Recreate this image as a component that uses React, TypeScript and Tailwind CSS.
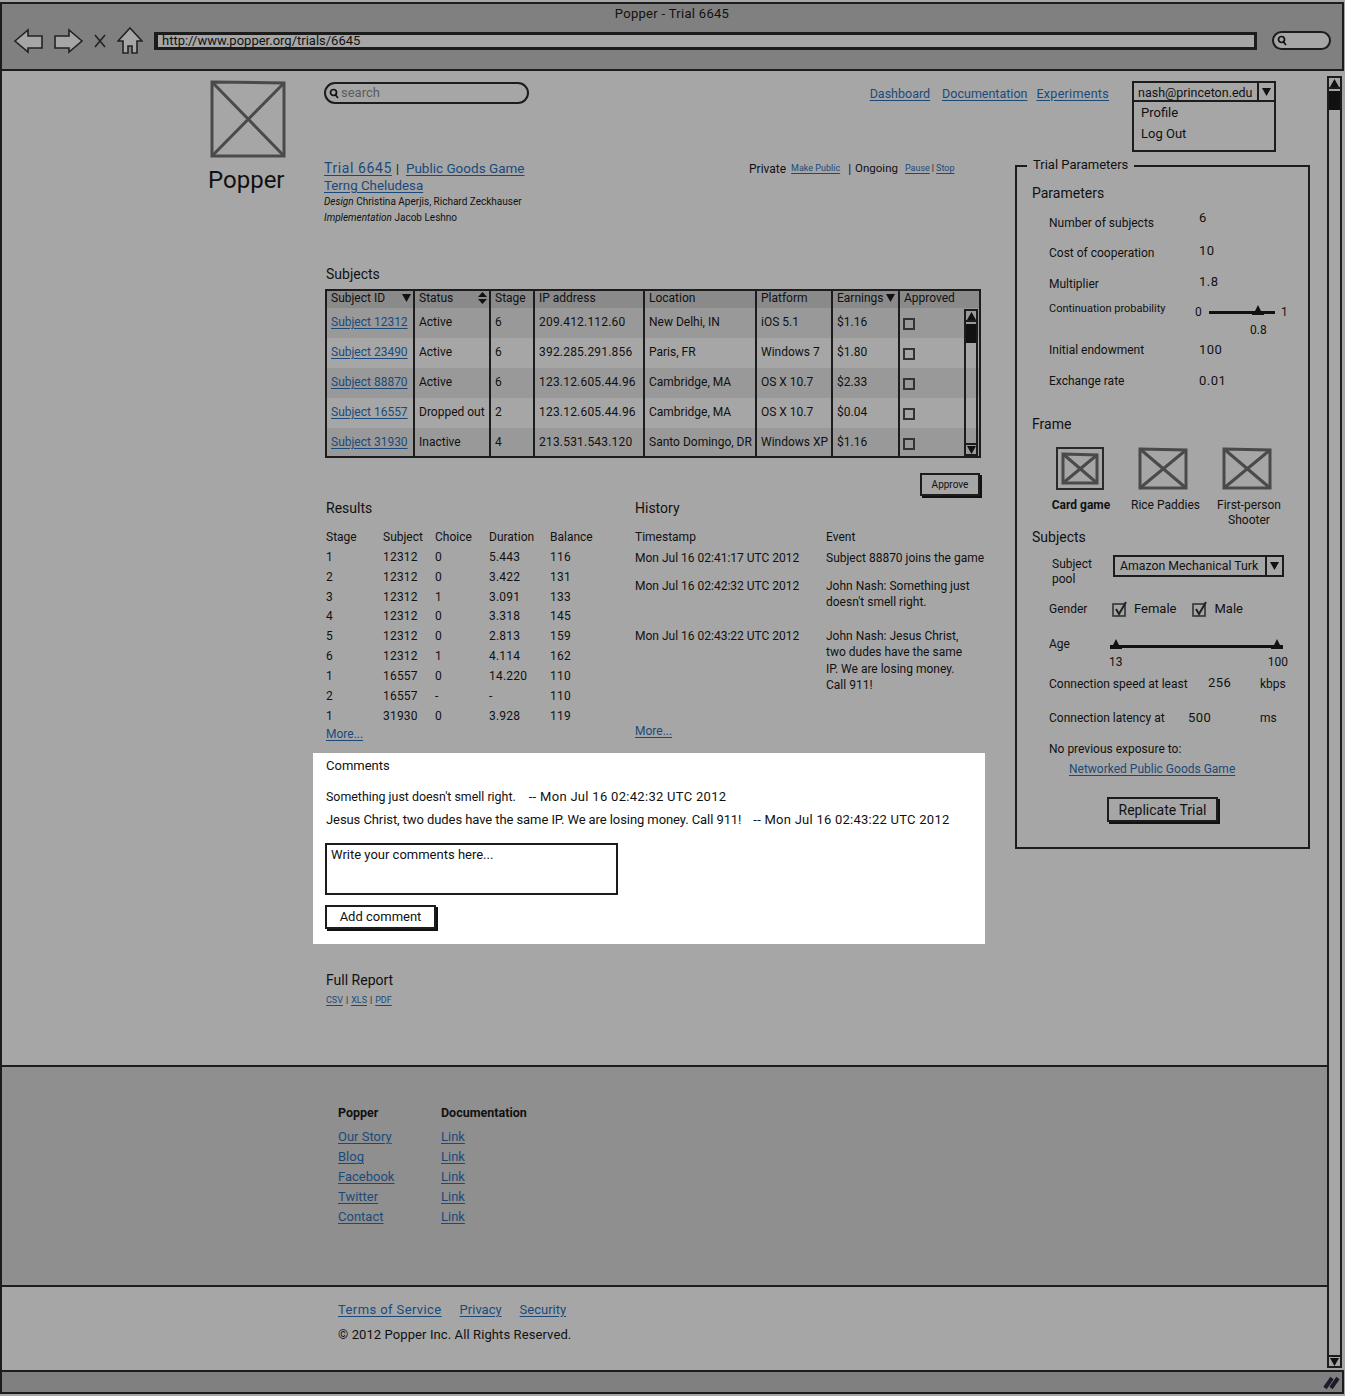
import type { ReactNode } from "react";

const subjects = [
  ["Subject 12312", "Active", "6", "209.412.112.60", "New Delhi, IN", "iOS 5.1", "$1.16"],
  ["Subject 23490", "Active", "6", "392.285.291.856", "Paris, FR", "Windows 7", "$1.80"],
  ["Subject 88870", "Active", "6", "123.12.605.44.96", "Cambridge, MA", "OS X 10.7", "$2.33"],
  ["Subject 16557", "Dropped out", "2", "123.12.605.44.96", "Cambridge, MA", "OS X 10.7", "$0.04"],
  ["Subject 31930", "Inactive", "4", "213.531.543.120", "Santo Domingo, DR", "Windows XP", "$1.16"],
];

const results = [
  ["1", "12312", "0", "5.443", "116"],
  ["2", "12312", "0", "3.422", "131"],
  ["3", "12312", "1", "3.091", "133"],
  ["4", "12312", "0", "3.318", "145"],
  ["5", "12312", "0", "2.813", "159"],
  ["6", "12312", "1", "4.114", "162"],
  ["1", "16557", "0", "14.220", "110"],
  ["2", "16557", "-", "-", "110"],
  ["1", "31930", "0", "3.928", "119"],
];

function A({ children, className = "" }: { children: ReactNode; className?: string }) {
  return <a className={`text-[#1b4a7a] underline underline-offset-2 ${className}`}>{children}</a>;
}

function XBox({ w, h, thick = 3, className = "" }: { w: number; h: number; thick?: number; className?: string }) {
  return (
    <svg width={w} height={h} viewBox={`0 0 ${w} ${h}`} fill="none" stroke="#4a4a4a" strokeWidth={thick} className={`block ${className}`}>
      <path d={`M2 2 L${w - 2} 3 L${w - 2} ${h - 2} L2 ${h - 2} Z`} />
      <path d={`M2 2 L${w - 2} ${h - 2} M${w - 2} 3 L2 ${h - 2}`} />
    </svg>
  );
}

function Caret({ className = "" }: { className?: string }) {
  return (
    <svg width="9" height="8" viewBox="0 0 9 8" className={className}>
      <path d="M0 0 H9 L4.5 8 Z" fill="#111" />
    </svg>
  );
}

function Thumb() {
  return (
    <svg width="12" height="10" viewBox="0 0 12 10" className="block">
      <path d="M6 0 L9 6 H12 V10 H0 V6 H3 Z" fill="#111" />
    </svg>
  );
}

function Check() {
  return (
    <svg width="16" height="16" viewBox="0 0 16 16" fill="none" className="block">
      <rect x="1" y="3" width="12" height="12" stroke="#333" strokeWidth="1.6" />
      <path d="M4 8 L7 13 L14 1" stroke="#222" strokeWidth="2" />
    </svg>
  );
}

function Scrollbar({ className }: { className: string }) {
  return (
    <div className={`flex flex-col border-2 border-[#1c1c1c] ${className}`}>
      <div className="flex h-[11px] items-center justify-center border-b-2 border-[#1c1c1c]">
        <Caret className="rotate-180" />
      </div>
      <div className="mt-[2px] h-[19px] bg-[#111]" />
      <div className="flex-1" />
      <div className="flex h-[11px] items-center justify-center border-t-2 border-[#1c1c1c]">
        <Caret />
      </div>
    </div>
  );
}

function Param({ label, value, className, valueClass = "" }: { label: string; value: string; className: string; valueClass?: string }) {
  return (
    <div className={`flex items-center pl-[32px] ${className}`}>
      <span className="w-[150px] text-[12px]">{label}</span>
      <span className={`text-[13px] tracking-[0.5px] ${valueClass}`}>{value}</span>
    </div>
  );
}

function Lens() {
  return (
    <svg width="10" height="11" viewBox="0 0 10 11" fill="none" stroke="#111" strokeWidth="1.7">
      <circle cx="4.5" cy="4.5" r="3" />
      <path d="M6.5 7 L9 10" />
    </svg>
  );
}

function BrowserBar() {
  return (
    <header className="relative flex h-[69px] shrink-0 items-center border-2 border-[#1c1c1c] bg-[#808080] pt-[8px] pl-[11px]">
      <span className="absolute top-0 left-0 w-full text-center text-[13px] tracking-[0.3px]">Popper - Trial 6645</span>
      <svg width="32" height="28" viewBox="0 0 32 28" fill="#a6a6a6" stroke="#222" strokeWidth="1.6">
        <path d="M2 14 L15 3 V9 H29 V21 H15 V25 Z" />
      </svg>
      <svg width="32" height="28" viewBox="0 0 32 28" fill="#a6a6a6" stroke="#222" strokeWidth="1.6" className="ml-[7px]">
        <path d="M30 14 L17 3 V9 H3 V21 H17 V25 Z" />
      </svg>
      <svg width="14" height="14" viewBox="0 0 14 14" stroke="#222" strokeWidth="1.6" className="ml-[9px]">
        <path d="M2 1 L12 13 M12 1 L2 13" />
      </svg>
      <svg width="26" height="28" viewBox="0 0 26 28" fill="#a6a6a6" stroke="#222" strokeWidth="1.6" className="ml-[10px]">
        <path d="M13 1 L25 14 H20 V26 H15 V19 H11 V26 H6 V14 H1 Z" />
      </svg>
      <div className="ml-[11px] flex h-[18px] w-[1103px] items-center border-y-[3px] border-r-[3px] border-l-[4px] border-[#1c1c1c] bg-[#a6a6a6] pl-[4px] text-[13px]">
        http://www.popper.org/trials/6645
      </div>
      <div className="ml-[15px] flex h-[19px] w-[59px] items-center rounded-full border-2 border-[#1c1c1c] bg-[#a6a6a6] pl-[3px]">
        <Lens />
      </div>
    </header>
  );
}

function SubjectsTable() {
  const heads = ["Subject ID", "Status", "Stage", "IP address", "Location", "Platform", "Earnings", "Approved"];
  const cols = "grid grid-cols-[88px_76px_44px_110px_112px_76px_67px_79px]";
  return (
    <div className="relative ml-px h-[169px] w-[656px] border-2 border-[#1c1c1c] text-[12px]">
      <div className={`${cols} h-[17px] items-stretch bg-[#8a8a8a]`}>
        {heads.map((h, i) => (
          <div key={h} className="flex items-start border-r-2 border-[#1c1c1c] pl-[4px] last:border-r-0">
            <span className="leading-[14px]">{h}</span>
            {i === 0 && <Caret className="mt-[3px] mr-[2px] ml-auto" />}
            {i === 1 && (
              <svg width="9" height="12" viewBox="0 0 9 12" className="mt-px mr-[2px] ml-auto">
                <path d="M0 5 L4.5 0 L9 5 Z M0 7 H9 L4.5 12 Z" fill="#111" />
              </svg>
            )}
            {i === 6 && <Caret className="mt-[3px] ml-[2px]" />}
          </div>
        ))}
      </div>
      {subjects.map((row, r) => (
        <div key={row[0]} className={`${cols} ${r === 4 ? "h-[28px]" : "h-[30px]"} ${r % 2 === 0 ? "bg-[#999999]" : "bg-[#a6a6a6]"}`}>
          {row.map((c, i) => (
            <div key={i} className="flex items-start border-r-2 border-[#1c1c1c] pt-[5px] pl-[4px] whitespace-nowrap">
              {i === 0 ? <A>{c}</A> : <span className={i === 3 ? "tracking-[0.2px]" : ""}>{c}</span>}
            </div>
          ))}
          <div className="pt-[10px] pl-[3px]">
            <div className="h-[12px] w-[12px] border-2 border-[#333]" />
          </div>
        </div>
      ))}
      <Scrollbar className="absolute top-[18px] right-[1px] bottom-0 w-[14px]" />
    </div>
  );
}

function Center() {
  return (
    <div className="w-[661px] shrink-0">
      <div className="flex h-[107px] pt-px">
        <div className="w-[425px]">
          <div className="flex h-[17px] items-center text-[13.5px] whitespace-nowrap">
            <A className="text-[14px] tracking-[0.6px]">Trial 6645</A>
            <span className="mr-[7px] ml-[4px] text-[12px]">|</span>
            <A>Public Goods Game</A>
          </div>
          <div className="flex h-[17px] items-center text-[13.3px]">
            <A>Terng Cheludesa</A>
          </div>
          <div className="text-[10px] leading-[16px] whitespace-nowrap">
            <i>Design</i> Christina Aperjis, Richard Zeckhauser
          </div>
          <div className="text-[10px] leading-[16px] whitespace-nowrap">
            <i>Implementation</i> Jacob Leshno
          </div>
        </div>
        <div className="flex h-[17px] items-center text-[12px] whitespace-nowrap">
          <span>Private</span>
          <A className="ml-[5px] text-[9px]">Make Public</A>
          <span className="mr-[4px] ml-[8px]">|</span>
          <span className="text-[11.5px]">Ongoing</span>
          <A className="ml-[7px] text-[9px]">Pause</A>
          <span className="mx-[2px] text-[9px]">|</span>
          <A className="text-[9px]">Stop</A>
        </div>
      </div>

      <h2 className="ml-[2px] h-[23px] text-[14px] leading-[16px]">Subjects</h2>
      <SubjectsTable />
      <div className="mt-[15px] flex justify-end pr-[5px]">
        <button className="flex h-[23px] w-[60px] items-center justify-center border-2 border-[#1c1c1c] text-[10px] shadow-[2px_2px_0_#111]">
          Approve
        </button>
      </div>

      <div className="mt-[4px] flex h-[253px] pl-[2px]">
        <div className="w-[309px]">
          <h2 className="h-[28px] text-[14px] leading-[16px]">Results</h2>
          <div className="grid grid-cols-[57px_52px_54px_61px_60px] text-[12px] leading-[19.85px]">
            {["Stage", "Subject", "Choice", "Duration", "Balance"].map((h) => (
              <div key={h}>{h}</div>
            ))}
            {results.flat().map((c, i) => (
              <div key={i} className="tracking-[0.2px]">{c}</div>
            ))}
          </div>
          <A className="block -mt-px w-fit text-[12px] leading-[18px]">More...</A>
        </div>
        <div className="w-[350px] text-[12px]">
          <h2 className="h-[27px] text-[14px] leading-[16px]">History</h2>
          <div className="grid grid-cols-[191px_159px] leading-[16.5px]">
            <div className="py-[1.5px]">Timestamp</div>
            <div className="py-[1.5px]">Event</div>
            <div className="mt-[3px] h-[28px]">Mon Jul 16 02:41:17 UTC 2012</div>
            <div className="mt-[3px] h-[28px] whitespace-nowrap">Subject 88870 joins the game</div>
            <div className="h-[50px]">Mon Jul 16 02:42:32 UTC 2012</div>
            <div className="h-[50px]">John Nash: Something just<br />doesn't smell right.</div>
            <div className="h-[94px]">Mon Jul 16 02:43:22 UTC 2012</div>
            <div className="h-[94px] whitespace-nowrap">
              John Nash: Jesus Christ,<br />two dudes have the same<br />IP. We are losing money.<br />Call 911!
            </div>
          </div>
          <A className="block w-fit text-[12px] leading-[18px]">More...</A>
        </div>
      </div>

      <section className="-ml-[11px] h-[191px] w-[672px] bg-white pt-[5px] pl-[13px] text-[13px]">
        <h2 className="h-[28px] leading-[16px]">Comments</h2>
        <p className="h-[23px] leading-[22px]">
          <span className="text-[12.4px]">Something just doesn't smell right.</span>
          <span className="ml-[13px] tracking-[0.3px]">-- Mon Jul 16 02:42:32 UTC 2012</span>
        </p>
        <p className="h-[22px] leading-[22px] whitespace-nowrap">
          <span className="tracking-[-0.08px]">Jesus Christ, two dudes have the same IP. We are losing money. Call 911!</span>
          <span className="ml-[12px] tracking-[0.25px]">-- Mon Jul 16 02:43:22 UTC 2012</span>
        </p>
        <div className="mt-[12px] -ml-px h-[52px] w-[293px] border-2 border-[#1c1c1c] pt-px pl-[4px] leading-[17px]">Write your comments here...</div>
        <button className="mt-[10px] -ml-px block h-[24px] w-[111px] border-2 border-[#1c1c1c] text-[13px] shadow-[2px_2px_0_#111]">
          Add comment
        </button>
      </section>

      <h2 className="mt-[28px] ml-[2px] h-[17px] text-[14px] leading-[17px]">Full Report</h2>
      <div className="ml-[2px] flex h-[24px] items-center text-[9px]">
        <A>CSV</A>
        <span className="mx-[3px]">|</span>
        <A>XLS</A>
        <span className="mx-[3px]">|</span>
        <A>PDF</A>
      </div>
    </div>
  );
}

function TrialPanel() {
  return (
    <aside className="relative mt-[6px] ml-[30px] h-[684px] w-[295px] border-2 border-[#1c1c1c]">
      <div className="absolute -top-[11px] left-[10px] bg-[#a6a6a6] px-[6px] text-[13px] leading-[17px]">Trial Parameters</div>
      <h3 className="mt-[17px] ml-[15px] h-[24px] text-[14px] leading-[18px]">Parameters</h3>
      <Param label="Number of subjects" value="6" className="h-[30px]" valueClass="-mt-[10px]" />
      <Param label="Cost of cooperation" value="10" className="h-[30px]" valueClass="-mt-[4px]" />
      <Param label="Multiplier" value="1.8" className="h-[31px]" valueClass="-mt-[4px]" />
      <div className="flex h-[36px] pl-[32px]">
        <span className="mt-[2px] w-[146px] text-[11px]">Continuation probability</span>
        <div className="mt-[4px] grid h-[28px] grid-cols-[14px_66px_auto] text-[12px]">
          <span>0</span>
          <div className="relative mt-[8px] h-[3px] bg-[#111]">
            <div className="absolute -top-[6px] left-[43px]"><Thumb /></div>
          </div>
          <span className="pl-[6px]">1</span>
          <span />
          <span className="pl-[41px]">0.8</span>
        </div>
      </div>
      <Param label="Initial endowment" value="100" className="h-[29px]" />
      <Param label="Exchange rate" value="0.01" className="h-[34px]" />

      <h3 className="mt-[17px] ml-[15px] h-[32px] text-[14px] leading-[18px]">Frame</h3>
      <div className="grid grid-cols-[86px_83px_100px] pl-[21px] text-center text-[12px] leading-[15px]">
        <div className="flex flex-col items-center">
          <div className="ml-[-2px] border-2 border-[#2a2a2a] p-[3px]"><XBox w={38} h={33} /></div>
          <span className="mt-[8px] font-bold">Card game</span>
        </div>
        <div className="flex flex-col items-center">
          <XBox w={50} h={43} className="mr-[5px]" />
          <span className="mt-[8px] whitespace-nowrap">Rice Paddies</span>
        </div>
        <div className="flex flex-col items-center pr-[16px]">
          <XBox w={50} h={43} className="mr-[4px]" />
          <span className="mt-[8px] whitespace-nowrap">First-person<br />Shooter</span>
        </div>
      </div>

      <h3 className="ml-[15px] h-[18px] text-[14px] leading-[18px]">Subjects</h3>
      <div className="mt-[1px] flex h-[44px] pl-[35px] text-[12px]">
        <span className="mt-[10px] w-[61px] leading-[15px]">Subject<br />pool</span>
        <div className="mt-[8px] flex h-[22px] w-[171px] items-center border-2 border-[#1c1c1c] pl-[5px] text-[12.3px]">
          <span className="flex-1 whitespace-nowrap">Amazon Mechanical Turk</span>
          <span className="flex h-full w-[17px] items-center justify-center border-l-2 border-[#1c1c1c]"><Caret /></span>
        </div>
      </div>
      <div className="flex h-[36px] items-center pl-[32px] text-[13px]">
        <span className="w-[63px] text-[12px]">Gender</span>
        <Check />
        <span className="mr-[16px] ml-[6px]">Female</span>
        <Check />
        <span className="ml-[6px]">Male</span>
      </div>
      <div className="flex h-[42px] pl-[32px] text-[12px]">
        <span className="mt-[8px] w-[62px]">Age</span>
        <div className="relative mt-[18px] h-[3px] w-[171px] bg-[#111]">
          <div className="absolute -top-[6px] -left-[1px]"><Thumb /></div>
          <div className="absolute -top-[6px] -right-[1px]"><Thumb /></div>
          <span className="absolute top-[8px] -left-[2px]">13</span>
          <span className="absolute top-[8px] -right-[6px]">100</span>
        </div>
      </div>
      <div className="flex h-[32px] items-center pb-[3px] pl-[32px] text-[12px]">
        <span className="w-[159px]">Connection speed at least</span>
        <span className="-mt-[2px] w-[52px] text-[13px] tracking-[0.5px]">256</span>
        <span>kbps</span>
      </div>
      <div className="flex h-[33px] items-center pl-[32px] text-[12px]">
        <span className="w-[139px]">Connection latency at</span>
        <span className="w-[72px] text-[13px] tracking-[0.5px]">500</span>
        <span>ms</span>
      </div>
      <div className="mt-[5px] pl-[32px] text-[12px] leading-[20px]">No previous exposure to:</div>
      <div className="pl-[52px] text-[12px] leading-[20px]"><A>Networked Public Goods Game</A></div>
      <button className="mt-[18px] ml-[90px] block h-[25px] w-[111px] border-2 border-[#1c1c1c] text-[14px] leading-none shadow-[2px_2px_0_#111]">
        Replicate Trial
      </button>
    </aside>
  );
}

function SiteHeader() {
  return (
    <div className="flex h-[79px] w-[952px] items-start pt-[2px]">
      <div className="flex h-[22px] w-[205px] items-center rounded-full border-2 border-[#1c1c1c] pl-[3px] text-[13px] text-[#5c5c5c]">
        <Lens />
        <span className="ml-[2px]">search</span>
      </div>
      <nav className="mt-[3px] ml-auto flex text-[12.5px]">
        <A>Dashboard</A>
        <A className="ml-[12px]">Documentation</A>
        <A className="ml-[9px] tracking-[0.3px]">Experiments</A>
      </nav>
      <div className="-mt-px ml-[23px] w-[144px] text-[12.5px]">
        <div className="flex h-[21px] items-center border-2 border-[#1c1c1c] pl-[4px]">
          <span className="flex-1 translate-y-[2px] whitespace-nowrap">nash@princeton.edu</span>
          <span className="flex h-full w-[17px] items-center justify-center border-l-2 border-[#1c1c1c]"><Caret /></span>
        </div>
        <div className="h-[50px] border-x-2 border-b-2 border-[#1c1c1c] pl-[7px] text-[13px] leading-[21px]">
          <div>Profile</div>
          <div>Log Out</div>
        </div>
      </div>
    </div>
  );
}

function Footer() {
  const left = ["Our Story", "Blog", "Facebook", "Twitter", "Contact"];
  return (
    <>
      <footer className="h-[222px] shrink-0 border-y-2 border-[#1c1c1c] bg-[#8f8f8f] pt-[36px] pl-[336px] text-[13px]">
        <div className="grid w-[240px] grid-cols-[103px_auto] leading-[20px]">
          <b className="h-[24px] text-[12.5px]">Popper</b>
          <b className="h-[24px] text-[12.5px]">Documentation</b>
          {left.map((l) => (
            <div key={l} className="contents">
              <div className="h-[20px]"><A>{l}</A></div>
              <div className="h-[20px]"><A>Link</A></div>
            </div>
          ))}
        </div>
      </footer>
      <div className="flex-1 pt-[13px] pl-[336px] text-[13px]">
        <div className="flex gap-[18px]">
          <A className="tracking-[0.4px]">Terms of Service</A>
          <A>Privacy</A>
          <A>Security</A>
        </div>
        <p className="mt-[5px] tracking-[0.1px]">© 2012 Popper Inc. All Rights Reserved.</p>
      </div>
    </>
  );
}

export default function App() {
  return (
    <div className="flex h-[1396px] w-[1345px] flex-col overflow-hidden bg-[#a6a6a6] pt-[2px] pr-[1px] pb-[2px] font-['Roboto',sans-serif] text-[#111]">
      <BrowserBar />
      <div className="flex min-h-0 flex-1">
        <main className="flex w-[1328px] flex-col border-l-2 border-[#1c1c1c]">
          <div className="flex h-[994px] shrink-0 pt-[9px]">
            <div className="w-[322px] shrink-0 pl-[208px]">
              <XBox w={76} h={78} />
              <div className="mt-[7px] -ml-[2px] text-[24px] leading-[30px]">Popper</div>
            </div>
            <div>
              <SiteHeader />
              <div className="flex items-start">
                <Center />
                <TrialPanel />
              </div>
            </div>
          </div>
          <Footer />
        </main>
        <Scrollbar className="mt-[5px] mb-[2px] ml-[-1px] w-[15px]" />
      </div>
      <div className="relative flex h-[24px] shrink-0 items-center justify-end border-2 border-[#1c1c1c] bg-[#808080] pr-[2px]">
        <svg width="17" height="15" viewBox="0 0 17 15" stroke="#1c1c2c" strokeWidth="4" fill="none">
          <path d="M2 13 L9 3 M8 13 L15 3" />
        </svg>
      </div>
    </div>
  );
}
